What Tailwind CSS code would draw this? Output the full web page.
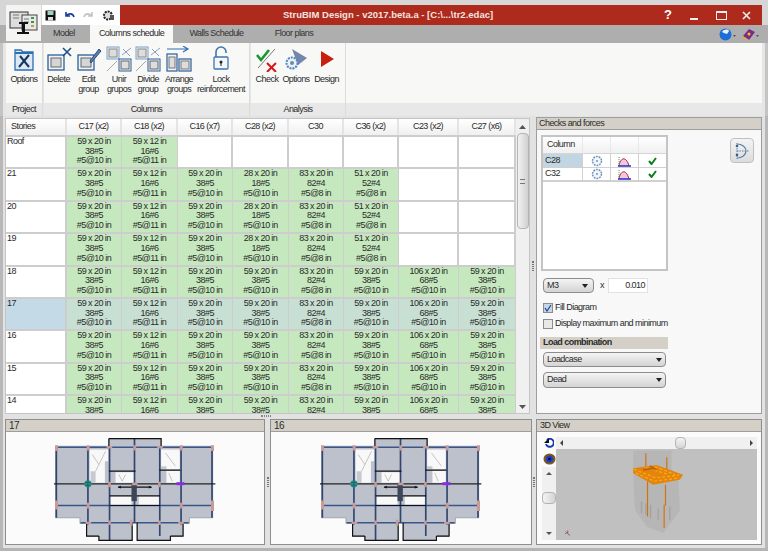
<!DOCTYPE html>
<html lang="en">
<head>
<meta charset="utf-8">
<title>StruBIM Design</title>
<script src="https://cdn.jsdelivr.net/npm/@tailwindcss/browser@4"></script>
</head>
<body class="bg-white">
<div class="relative w-[768px] h-[551px] overflow-hidden bg-[#b4b4b4] font-['Liberation_Sans',sans-serif] text-[9px] leading-[9.7px] tracking-[-0.55px] text-[#2a2a2a]">

  <!-- Title bar -->
  <div class="flex h-[25px] pt-[5px] pl-[42px] pr-[6px] bg-[#d6d6d6]">
    <div class="flex items-center gap-[8px] w-[78px] pl-[3px] bg-white">
      <svg width="11" height="11" viewBox="0 0 11 11"><rect x="0.5" y="0.5" width="10" height="10" fill="#111"/><rect x="2.5" y="1" width="6" height="4" fill="#9fd0c0"/><rect x="3" y="7" width="5" height="3.500" fill="#ddd"/></svg>
      <svg width="11" height="9" viewBox="0 0 11 9"><path d="M2 1v4h4M2 5c2-3 7-3 8 1" fill="none" stroke="#1a3b9c" stroke-width="1.600"/></svg>
      <svg width="11" height="9" viewBox="0 0 11 9"><path d="M9 1v4H5M9 5C7 2 2 2 1 6" fill="none" stroke="#c4c4c4" stroke-width="1.600"/></svg>
      <svg width="13" height="13" viewBox="0 0 13 13"><circle cx="6" cy="6.500" r="4" fill="#ddd" stroke="#222" stroke-width="2" stroke-dasharray="2 1"/><rect x="8" y="6" width="4" height="5" fill="#555"/></svg>
    </div>
    <div class="flex-1 flex items-center bg-[#ae2a1c] relative">
      <div class="w-full pl-[163px] font-bold text-[9.5px] tracking-normal text-[#f4e4e0]">StruBIM Design - v2017.beta.a - [C:\...\tr2.edac]</div>
      <div class="absolute right-0 top-0 h-[20px] flex items-center text-white">
        <span class="w-[24px] text-center font-bold text-[13px] tracking-normal">?</span>
        <span class="w-[28px] flex justify-center"><svg width="9" height="9" viewBox="0 0 9 9"><rect x="0" y="7" width="8" height="2" fill="#eee"/></svg></span>
        <span class="w-[26px] flex justify-center"><svg width="11" height="9" viewBox="0 0 11 9"><rect x="0.5" y="0.5" width="10" height="8" fill="none" stroke="#eee"/><rect x="0" y="0" width="11" height="2" fill="#eee"/></svg></span>
        <span class="w-[28px] flex justify-center pr-[3px]"><svg width="9" height="9" viewBox="0 0 9 9"><path d="M1 1l7 7M8 1l-7 7" stroke="#eee" stroke-width="1.600"/></svg></span>
      </div>
    </div>
  </div>

  <!-- App button -->
  <div class="absolute left-[6px] top-[5px] w-[35px] h-[36px] bg-[#f4f4f2] flex items-center justify-center">
    <svg width="30" height="26" viewBox="0 0 30 26">
      <rect x="1" y="2" width="18" height="16" fill="#ddd" stroke="#333"/>
      <rect x="13" y="5" width="15" height="15" fill="#e8e8e8" stroke="#444"/>
      <rect x="22" y="7" width="3" height="2" fill="#3a9a44"/><rect x="22" y="11" width="3" height="2" fill="#3a9a44"/><rect x="22" y="15" width="3" height="2" fill="#c8a030"/>
      <path d="M4 5h6M4 8h6M15 9h5M15 12h5" stroke="#777"/>
      <path d="M10 12h9v2h-3v8h4v2H8v-2h5v-8h-3z" fill="#111"/>
    </svg>
  </div>

  <!-- Tabs -->
  <div class="flex h-[18px] pl-[43px] bg-[#aeaeae] pr-[9px] items-stretch">
    <div class="w-[47px] pl-[10px] flex items-center text-[#333]">Model</div>
    <div class="w-[83px] flex items-center justify-center bg-[#f8f8f6]">Columns schedule</div>
    <div class="w-[85px] flex items-center justify-center text-[#333] ml-[1px]">Walls Schedule</div>
    <div class="w-[60px] flex items-center justify-center text-[#333] ml-[5px]">Floor plans</div>
    <div class="ml-auto flex items-center gap-[6px]">
      <svg width="17" height="13" viewBox="0 0 17 13"><circle cx="6.500" cy="6.500" r="6" fill="#1c6fd8"/><path d="M3 4c2-3 6-3 7-1l-2 3-3-1z" fill="#e8f4ff"/><path d="M14 7h3l-1.500 2z" fill="#555"/></svg>
      <svg width="17" height="13" viewBox="0 0 17 13"><path d="M1 8l6-7 6 3-6 8z" fill="#7a2b88"/><path d="M1 8l6 4 0 1-6-3z" fill="#e0b030"/><circle cx="7" cy="6" r="1.500" fill="#f0c030"/><path d="M14 7h3l-1.500 2z" fill="#555"/></svg>
    </div>
  </div>

  <!-- Ribbon -->
  <div class="flex h-[73px] pl-[3px] pr-[3px] border-x-[3px] border-[#c4c4c4] bg-[#e6e6e6]">
    <div class="w-[37px] flex flex-col bg-[#f8f8f6] border-r border-[#dcdcdc]">
      <div class="flex-1 flex">
        <div class="w-full flex flex-col items-center pt-[3px]">
          <svg class="h-[26px]" width="24" height="26" viewBox="0 0 24 26"><path d="M3 4h6l2 2h10v18H3z" fill="#dce8f4" stroke="#2c6fb4" stroke-width="1.300"/><path d="M3 7h18" stroke="#2c6fb4" stroke-width="2"/><path d="M7 21L17 9M8 10l9 11" stroke="#16365c" stroke-width="2"/></svg>
          <span class="mt-[3px]">Options</span>
        </div>
      </div>
      <div class="h-[13px] flex items-center justify-center bg-[#e8e8e8]">Project</div>
    </div>
    <div class="w-[206px] ml-[1px] flex flex-col bg-[#f8f8f6] border-r border-[#dcdcdc]">
      <div class="flex-1 flex">
        <div class="w-[29px] flex flex-col items-center pt-[3px]">
          <svg class="h-[26px]" width="26" height="26" viewBox="0 0 26 26"><rect x="2" y="9" width="16" height="15" fill="#eef3f8" stroke="#2c5f94" stroke-width="1.300"/><rect x="5" y="12" width="10" height="9" fill="#d6d6d6" stroke="#666"/><path d="M17 2l8 8M25 2l-8 8" stroke="#1d4f8c" stroke-width="1.600"/></svg>
          <span class="mt-[3px]">Delete</span>
        </div>
        <div class="w-[31px] flex flex-col items-center pt-[3px] text-center">
          <svg class="h-[26px]" width="26" height="26" viewBox="0 0 26 26"><rect x="2" y="9" width="16" height="15" fill="#eef3f8" stroke="#2c5f94" stroke-width="1.300"/><rect x="5" y="12" width="10" height="9" fill="#d6d6d6" stroke="#666"/><path d="M14 15L23 3l2 2-10 12z" fill="#5b7fb0" stroke="#274d80"/></svg>
          <span class="mt-[3px]">Edit<br>group</span>
        </div>
        <div class="w-[30px] flex flex-col items-center pt-[3px] text-center">
          <svg class="h-[26px]" width="26" height="26" viewBox="0 0 26 26"><rect x="1" y="1" width="12" height="12" fill="#eef3f8" stroke="#7f9fc0"/><rect x="3" y="3" width="8" height="8" fill="#ddd" stroke="#888"/><rect x="13" y="13" width="12" height="12" fill="#eef3f8" stroke="#2c5f94"/><rect x="15" y="15" width="8" height="8" fill="#ddd" stroke="#666"/><path d="M1 25l10-10" stroke="#a8a8a8"/><path d="M16 9l9-7M17 3l7 7" stroke="#8a9fc0"/></svg>
          <span class="mt-[3px]">Unir<br>grupos</span>
        </div>
        <div class="w-[28px] flex flex-col items-center pt-[3px] text-center">
          <svg class="h-[26px]" width="26" height="26" viewBox="0 0 26 26"><rect x="1" y="1" width="12" height="12" fill="#eef3f8" stroke="#7f9fc0"/><rect x="3" y="3" width="8" height="8" fill="#ddd" stroke="#888"/><rect x="13" y="13" width="12" height="12" fill="#eef3f8" stroke="#2c5f94"/><rect x="15" y="15" width="8" height="8" fill="#ddd" stroke="#666"/><path d="M1 25l10-10" stroke="#a8a8a8"/><path d="M16 9l9-7M17 3l7 7" stroke="#8a9fc0"/></svg>
          <span class="mt-[3px]">Divide<br>group</span>
        </div>
        <div class="w-[34px] flex flex-col items-center pt-[3px] text-center">
          <svg class="h-[26px]" width="26" height="26" viewBox="0 0 26 26"><path d="M1 3h20M17 0l5 3-5 3" fill="none" stroke="#2c6fb4" stroke-width="1.200"/><rect x="1" y="8" width="10" height="17" fill="#eef3f8" stroke="#2c5f94" stroke-width="1.200"/><rect x="3" y="11" width="6" height="11" fill="#ddd" stroke="#777"/><rect x="13" y="13" width="12" height="12" fill="#eef3f8" stroke="#2c5f94" stroke-width="1.200"/><rect x="15" y="15" width="8" height="8" fill="#ddd" stroke="#777"/></svg>
          <span class="mt-[3px]">Arrange<br>groups</span>
        </div>
        <div class="w-[50px] flex flex-col items-center pt-[3px] text-center">
          <svg class="h-[26px]" width="16" height="26" viewBox="0 0 16 26"><path d="M3 11V6a5 5 0 0 1 10 0v1" fill="none" stroke="#3d76b4" stroke-width="1.600"/><rect x="1" y="11" width="14" height="12" rx="1" fill="#f3f6fa" stroke="#3d76b4" stroke-width="1.300"/><circle cx="8" cy="16" r="1.500" fill="#222"/><rect x="7.500" y="16" width="1" height="4" fill="#222"/></svg>
          <span class="mt-[3px]">Lock<br>reinforcement</span>
        </div>
      </div>
      <div class="h-[13px] flex items-center justify-center bg-[#e8e8e8]">Columns</div>
    </div>
    <div class="w-[95px] ml-[1px] flex flex-col bg-[#f8f8f6] border-r border-[#dcdcdc]">
      <div class="flex-1 flex pl-[2px]">
        <div class="w-[28px] flex flex-col items-center pt-[3px]">
          <svg class="h-[26px]" width="22" height="26" viewBox="0 0 22 26"><path d="M1 9l4 5 8-10" fill="none" stroke="#129a2c" stroke-width="2.600"/><path d="M19 3L2 22" stroke="#777"/><path d="M11 17l9 9M20 17l-9 9" stroke="#d6181c" stroke-width="2"/></svg>
          <span class="mt-[3px]">Check</span>
        </div>
        <div class="w-[30px] flex flex-col items-center pt-[3px]">
          <svg class="h-[26px]" width="22" height="26" viewBox="0 0 22 26"><path d="M7 3l15 9-9 7z" fill="#7287ab"/><circle cx="7" cy="17" r="5.500" fill="#eaf2fa" stroke="#4f86c0" stroke-width="2" stroke-dasharray="2 1"/><circle cx="7" cy="17" r="2" fill="#7287ab"/></svg>
          <span class="mt-[3px]">Options</span>
        </div>
        <div class="w-[31px] flex flex-col items-center pt-[3px]">
          <svg class="h-[26px]" width="16" height="26" viewBox="0 0 16 26"><path d="M2 5l13 8-13 8z" fill="#c8200c"/></svg>
          <span class="mt-[3px]">Design</span>
        </div>
      </div>
      <div class="h-[13px] flex items-center justify-center bg-[#e8e8e8]">Analysis</div>
    </div>
    <div class="flex-1 flex flex-col bg-[#f8f8f6]">
      <div class="flex-1"></div>
      <div class="h-[13px] bg-[#e8e8e8]"></div>
    </div>
  </div>

  <!-- Work area -->
  <div class="h-[432px] pl-[2px] pr-[3px] pt-[1px] border-x-[3px] border-[#b8b8b8] bg-[#e2e2e2]">
    <div class="flex h-[298px]">
      <!-- Columns table -->
      <div class="mt-[1px] w-[525px] h-[296px] flex border border-[#c4c4c4] bg-white">
        <div class="flex-1 overflow-hidden">
          <div id="schedule" class="grid grid-cols-[61px_55px_56px_55px_56px_55px_55px_60px_57px] grid-rows-[16px] auto-rows-[32.4px] text-center"></div>
        </div>
        <div class="w-[13px] flex flex-col items-center bg-[#f0f0f0]">
          <svg class="mt-[6px]" width="7" height="4" viewBox="0 0 7 4"><path d="M0 4l3.500-4 3.500 4z" fill="#555"/></svg>
          <div class="mt-[4px] w-[12px] h-[96px] rounded-sm border border-[#b4b4b4] bg-gradient-to-r from-[#f2f2f2] to-[#d0d0d0] flex items-center justify-center">
            <div class="w-[5px] h-[5px] border-y border-[#777]"></div>
          </div>
          <svg class="mt-auto mb-[4px]" width="7" height="4" viewBox="0 0 7 4"><path d="M0 0l3.500 4 3.500-4z" fill="#555"/></svg>
        </div>
      </div>

      <div class="w-[6px] flex items-center justify-center"><div class="w-[2px] h-[10px] border-x border-dotted border-[#777]"></div></div>

      <!-- Checks and forces -->
      <div class="w-[226px] h-[297px] flex flex-col border border-[#9e9e9e] bg-[#f8f8f8]">
        <div class="h-[12px] px-[2px] flex items-center bg-[#d4d0c8] border-b border-[#9e9e9e]">Checks and forces</div>
        <div class="flex justify-between pl-[4px] pr-[7px] pt-[5px]">
          <div class="w-[127px] h-[136px] border-2 border-[#c4c4c4] bg-white">
            <div class="flex h-[17px] bg-gradient-to-b from-[#ffffff] to-[#f0f0f0] border-b border-[#d6d6d6]">
              <div class="w-[40px] pl-[4px] flex items-center border-r border-[#e8e8e8]">Column</div>
              <div class="w-[28px] border-r border-[#e8e8e8]"></div>
              <div class="w-[28px] border-r border-[#e8e8e8]"></div>
            </div>
            <div class="flex h-[14px] border-b border-[#d0d0d0]">
              <div class="w-[40px] pl-[2px] flex items-center bg-[#c2d6e2] border-r border-[#d0d0d0]">C28</div>
              <div class="w-[28px] flex items-center justify-center border-r border-[#d0d0d0]"><svg width="12" height="12" viewBox="0 0 12 12"><circle cx="6" cy="6" r="4.500" fill="#f2f6fb" stroke="#6d90bc" stroke-width="1.500" stroke-dasharray="1.800 1"/><circle cx="6" cy="6" r="1" fill="#6d90bc"/></svg></div>
              <div class="w-[28px] flex items-center justify-center border-r border-[#d0d0d0]"><svg width="13" height="12" viewBox="0 0 13 12"><path d="M1 11V1" stroke="#3aa83a" stroke-dasharray="1 1"/><path d="M1 11C2 3 8 0 11 11" fill="#f4c8dc" stroke="#b02040"/><path d="M0 11h13" stroke="#2030c8" stroke-width="1.500"/></svg></div>
              <div class="flex-1 flex items-center justify-center"><svg width="9" height="8" viewBox="0 0 9 8"><path d="M1 4l2.500 3L8 1" fill="none" stroke="#0f7f1e" stroke-width="2"/></svg></div>
            </div>
            <div class="flex h-[14px] border-b-2 border-[#d0d0d0]">
              <div class="w-[40px] pl-[2px] flex items-center border-r border-[#d0d0d0]">C32</div>
              <div class="w-[28px] flex items-center justify-center border-r border-[#d0d0d0]"><svg width="12" height="12" viewBox="0 0 12 12"><circle cx="6" cy="6" r="4.500" fill="#f2f6fb" stroke="#6d90bc" stroke-width="1.500" stroke-dasharray="1.800 1"/><circle cx="6" cy="6" r="1" fill="#6d90bc"/></svg></div>
              <div class="w-[28px] flex items-center justify-center border-r border-[#d0d0d0]"><svg width="13" height="12" viewBox="0 0 13 12"><path d="M1 11V1" stroke="#3aa83a" stroke-dasharray="1 1"/><path d="M1 11C2 3 8 0 11 11" fill="#f4c8dc" stroke="#b02040"/><path d="M0 11h13" stroke="#2030c8" stroke-width="1.500"/></svg></div>
              <div class="flex-1 flex items-center justify-center"><svg width="9" height="8" viewBox="0 0 9 8"><path d="M1 4l2.500 3L8 1" fill="none" stroke="#0f7f1e" stroke-width="2"/></svg></div>
            </div>
          </div>
          <div class="mt-[3px] w-[24px] h-[25px] rounded-sm border border-[#c0c0c0] bg-gradient-to-b from-[#f4f4f4] to-[#dcdcdc] flex items-center justify-center">
            <svg width="16" height="16" viewBox="0 0 16 16"><path d="M3 1c5 0 9 3 9 7s-4 7-9 7" fill="none" stroke="#5b7fa8" stroke-width="1.200"/><path d="M3 0v16" stroke="#5b7fa8" stroke-dasharray="1.500 1"/><path d="M3 8h12" stroke="#5b7fa8" stroke-dasharray="1.500 1"/><circle cx="3" cy="3" r="1.300" fill="#3a5f8c"/><circle cx="3" cy="12" r="1.300" fill="#3a5f8c"/></svg>
          </div>
        </div>
        <div class="flex items-center mt-[7px] pl-[6px]">
          <div class="w-[51px] h-[15px] px-[3px] flex items-center justify-between rounded-sm border border-[#8c8c8c] bg-gradient-to-b from-[#f4f4f4] to-[#d4d4d4]">M3<svg width="6" height="4" viewBox="0 0 6 4" class="mr-[2px]"><path d="M0 0h6L3 4z" fill="#222"/></svg></div>
          <span class="ml-[6px]">x</span>
          <div class="ml-[4px] w-[40px] h-[15px] pr-[2px] flex items-center justify-end border border-[#e2e2e2] bg-white">0.010</div>
        </div>
        <label class="flex items-center gap-[2px] mt-[10px] pl-[6px]">
          <span class="w-[10px] h-[10px] border border-[#8c8c8c] bg-[#c6d6e8] flex items-center justify-center"><svg width="8" height="8" viewBox="0 0 8 8"><path d="M1 4l2 3 4-6" fill="none" stroke="#2c4c8c" stroke-width="1.300"/></svg></span>Fill Diagram
        </label>
        <label class="flex items-center gap-[2px] mt-[6px] pl-[6px]">
          <span class="w-[10px] h-[10px] border border-[#8c8c8c] bg-[#e8e8e8]"></span>Display maximum and minimum
        </label>
        <div class="ml-[3px] mt-[8px] w-[128px] h-[12px] pl-[3px] flex items-center bg-[#d4d0c8] font-bold">Load combination</div>
        <div class="ml-[6px] mt-[3px] w-[123px] h-[15px] px-[3px] flex items-center justify-between rounded-sm border border-[#8c8c8c] bg-gradient-to-b from-[#f4f4f4] to-[#d4d4d4]">Loadcase<svg width="6" height="4" viewBox="0 0 6 4"><path d="M0 0h6L3 4z" fill="#222"/></svg></div>
        <div class="ml-[6px] mt-[5px] w-[123px] h-[16px] px-[3px] flex items-center justify-between rounded-sm border border-[#8c8c8c] bg-gradient-to-b from-[#f4f4f4] to-[#d4d4d4]">Dead<svg width="6" height="4" viewBox="0 0 6 4"><path d="M0 0h6L3 4z" fill="#222"/></svg></div>
      </div>
    </div>

    <div class="h-[4px] flex justify-center"><div class="mr-[236px] w-[10px] h-[2px] border-y border-dotted border-[#888]"></div></div>

    <!-- Bottom views -->
    <div class="flex h-[126px]">
      <div class="w-[260px] flex flex-col border border-[#8e8e8e] bg-[#fbfbfb]">
        <div class="h-[12px] pl-[3px] flex items-center bg-[#d4d0c8] border-b border-[#9e9e9e] text-[10px]">17</div>
        <div class="flex-1 flex justify-center pt-[4px]">
          <svg width="163" height="107" viewBox="165 75 490 320"><use href="#plan"/></svg>
        </div>
      </div>
      <div class="w-[5px] flex items-center justify-center"><div class="w-[2px] h-[10px] border-x border-dotted border-[#777]"></div></div>
      <div class="w-[262px] flex flex-col border border-[#8e8e8e] bg-[#fbfbfb]">
        <div class="h-[12px] pl-[3px] flex items-center bg-[#d4d0c8] border-b border-[#9e9e9e] text-[10px]">16</div>
        <div class="flex-1 flex justify-center pt-[4px]">
          <svg width="163" height="107" viewBox="165 75 490 320"><use href="#plan"/></svg>
        </div>
      </div>
      <div class="w-[4px] flex items-center justify-center"><div class="w-[2px] h-[10px] border-x border-dotted border-[#777]"></div></div>
      <div class="w-[226px] flex flex-col border border-[#8e8e8e] bg-[#fbfbfb]">
        <div class="h-[12px] pl-[3px] flex items-center bg-[#d4d0c8] border-b border-[#9e9e9e]">3D View</div>
        <div class="flex-1 flex pt-[5px] pl-[5px] pr-[4px] pb-[4px]">
          <div class="w-[14px] flex flex-col items-center">
            <svg class="mt-[1px]" width="10" height="10" viewBox="0 0 10 10"><path d="M3 2a4 4 0 1 1-1 4" fill="none" stroke="#1a3bb0" stroke-width="2"/><path d="M5 0v5H0z" fill="#111"/></svg>
            <svg class="mt-[5px]" width="13" height="12" viewBox="0 0 13 12"><ellipse cx="6.500" cy="6" rx="6" ry="5.500" fill="#7a5a20"/><circle cx="6.500" cy="6" r="3.500" fill="#1a3bd0"/><circle cx="6.500" cy="6" r="1.200" fill="#000"/></svg>
            <div class="mt-[2px] w-[14px] h-[73px] bg-[#f0f0f0] flex flex-col items-center">
              <svg class="mt-[5px]" width="6" height="3" viewBox="0 0 6 3"><path d="M0 3l3-3 3 3z" fill="#555"/></svg>
              <div class="mt-[17px] w-[14px] h-[12px] rounded-sm border border-[#b4b4b4] bg-gradient-to-r from-[#f4f4f4] to-[#d4d4d4]"></div>
              <svg class="mt-auto mb-[5px]" width="6" height="3" viewBox="0 0 6 3"><path d="M0 0l3 3 3-3z" fill="#555"/></svg>
            </div>
          </div>
          <div class="flex-1 flex flex-col">
            <div class="h-[12px] flex items-center justify-between px-[4px] bg-[#f0f0f0] relative">
              <svg width="3" height="6" viewBox="0 0 3 6"><path d="M3 0L0 3l3 3z" fill="#444"/></svg>
              <div class="absolute left-[119px] top-0 w-[11px] h-[12px] rounded-sm border border-[#b4b4b4] bg-gradient-to-b from-[#f4f4f4] to-[#d4d4d4]"></div>
              <svg width="3" height="6" viewBox="0 0 3 6"><path d="M0 0l3 3-3 3z" fill="#444"/></svg>
            </div>
            <div class="flex-1 overflow-hidden bg-[#c0c0c0]">
              <svg width="201" height="91" viewBox="78 118 604 272">
                <g class="blur-[2px]" opacity="0.45">
                  <path d="M310 122h115v55l20 20 5 105-50 68-50-20-35-50-5-100z" fill="#aaaaaa"/>
                </g>
                <path d="M335 275v35M348 280v35M362 285v40M385 295v35M420 290v40" stroke="#9a9a9a" stroke-width="4" opacity="0.7"/>
                <path d="M310 175l70-10 80 30-10 15-80 15-60-35z" fill="#e5840a"/>
                <path d="M312 178l66 26 70-8M318 190l56 24 74-10M345 172l70 22M375 170l60 24" stroke="#f7a81e" stroke-width="4" fill="none" stroke-dasharray="9 6"/>
                <path d="M340 180l30-4M360 168l20 12" stroke="#b8620a" stroke-width="5"/>
                <path d="M348 130v42M411 142v35M353 215v105M407 225v62M403 285v70" stroke="#d2720c" stroke-width="3.500"/>
                <path d="M105 372l10-5M113 362v10" stroke="#c03030" stroke-width="2"/>
                <path d="M113 372l7 5" stroke="#3040c0" stroke-width="2"/>
                <path d="M106 364l6 6" stroke="#30a040" stroke-width="2"/>
              </svg>
            </div>
          </div>
        </div>
      </div>
    </div>
  </div>

  <!-- Shared floor plan -->
  <svg width="0" height="0" class="absolute">
    <defs>
      <g id="plan">
        <path d="M170 105H330V82H487V105H642V320H572V337H553V375H515V388H415V335H400V388H300V375H263V337H243V320H170Z" fill="#bcc1cc" stroke="#8a8f9a" stroke-width="2"/>
        <path d="M272 115H328V150H318V215H272ZM487 115H543V175H487ZM503 178H543V215H503ZM350 183H408V215H350ZM335 255H398V282H335ZM420 255H482V282H420Z" fill="#f8f8f8"/>
        <path d="M275 180H290V215H275ZM487 165H503V175H487Z" fill="#c6c9d0"/>
        <path d="M280 130l20 30M320 120l-30 60M500 125l30 40M360 190l10 20 10-20M510 185l10 25" stroke="#aaa" stroke-width="2" fill="none"/>
        <path d="M170 108H642M170 283H642M245 335H570" stroke="#3a5688" stroke-width="5" fill="none"/>
        <path d="M172 105V320M267 105V340M332 105V388M407 82V335M483 105V375M547 105V340M640 105V320" stroke="#31466e" stroke-width="5" fill="none"/>
        <path d="M165 218H650" stroke="#222" stroke-width="4"/>
        <path d="M330 82H487V105M330 82V105M330 180H410M482 177H545M332 254H484M332 283H484M263 337V375H300M553 337V375H515M300 375V388H400V335M415 335V388H515V375" stroke="#111" stroke-width="3.500" fill="none"/>
        <path d="M358 228H458" stroke="#111" stroke-width="4"/>
        <path d="M450 224l10 4-10 4zM366 224l-10 4 10 4z" fill="#111"/>
        <path d="M398 220h16v50h-16z" fill="#3c4658"/>
        <path d="M168 102h9v17h-9zM263 102h9v16h-9zM323 104h17v8h-17zM403 102h9v16h-9zM475 104h17v8h-17zM543 102h9v16h-9zM637 102h9v17h-9zM168 268h9v27h-9zM263 275h9v17h-9zM543 275h9v17h-9zM637 268h9v32h-9zM260 332h17v7h-17zM328 328h8v14h-8zM393 326h8v18h-8zM478 328h8v14h-8zM538 332h17v7h-17zM328 212h8v16h-8zM400 214h16v8h-16zM478 212h8v16h-8z" fill="#c89a98"/>
        <circle cx="267" cy="218" r="11" fill="#2e8f8a"/>
        <path d="M258 214h18M258 222h18M267 207v22" stroke="#0f5a58" stroke-width="2"/>
        <rect x="533" y="213" width="24" height="9" fill="#8a2be8"/>
      </g>
    </defs>
  </svg>
</div>
<script>
  // Schedule contents: each column has one text per story group
  const columns = ['C17 (x2)', 'C18 (x2)', 'C16 (x7)', 'C28 (x2)', 'C30', 'C36 (x2)', 'C23 (x2)', 'C27 (x6)'];
  const sections = {
    'C17 (x2)': ['59 x 20 in', '38#5', '#5@10 in'],
    'C18 (x2)': ['59 x 12 in', '16#6', '#5@11 in'],
    'C16 (x7)': ['59 x 20 in', '38#5', '#5@10 in'],
    'C28 (x2)': ['28 x 20 in', '18#5', '#5@10 in'],
    'C30': ['83 x 20 in', '82#4', '#5@8 in'],
    'C36 (x2)': ['51 x 20 in', '52#4', '#5@8 in'],
    'C23 (x2)': ['106 x 20 in', '68#5', '#5@10 in'],
    'C27 (x6)': ['59 x 20 in', '38#5', '#5@10 in']
  };
  // Lower floors, from story 18 down, use other sizes for these columns
  const lower = {
    'C28 (x2)': ['59 x 20 in', '38#5', '#5@10 in'],
    'C36 (x2)': ['59 x 20 in', '38#5', '#5@10 in']
  };
  // How many columns exist on each story, counted from the left
  const stories = [['Roof', 2], ['21', 6], ['20', 6], ['19', 6], ['18', 8], ['17', 8], ['16', 8], ['15', 8], ['14', 8]];

  const grid = document.getElementById('schedule');
  const headBase = 'flex items-center justify-center bg-gradient-to-b from-white to-[#f0f0f0] border-r-2 border-[#e4e4e4]';
  let html = '<div class="pl-[5px] flex items-center bg-gradient-to-b from-white to-[#f0f0f0] border-r-2 border-[#e4e4e4]">Stories</div>';
  html += columns.map(c => `<div class="${headBase}">${c}</div>`).join('');

  stories.forEach(([name, count]) => {
    const selected = name === '17';
    const low = parseInt(name) <= 18;
    const nameBg = selected ? 'bg-[#c4dae6]' : 'bg-white';
    html += `<div class="pl-[1px] text-left border-t-2 border-r-2 border-[#cdcdcd] ${nameBg}">${name}</div>`;
    columns.forEach((c, i) => {
      let data = (low && lower[c]) || sections[c];
      // Row 14 is cut by the bottom of the table, only two lines show
      if (name === '14') data = data.slice(0, 2);
      if (i < count) {
        const bg = selected ? 'bg-[#c7e0d3]' : 'bg-[#c6e8bf]';
        html += `<div class="border-t-2 border-r border-[#cdcdcd] ${bg}">${data.join('<br>')}</div>`;
      } else {
        html += '<div class="border-t-2 border-r-2 border-[#cdcdcd] bg-white"></div>';
      }
    });
  });
  grid.innerHTML = html;
</script>
</body>
</html>
